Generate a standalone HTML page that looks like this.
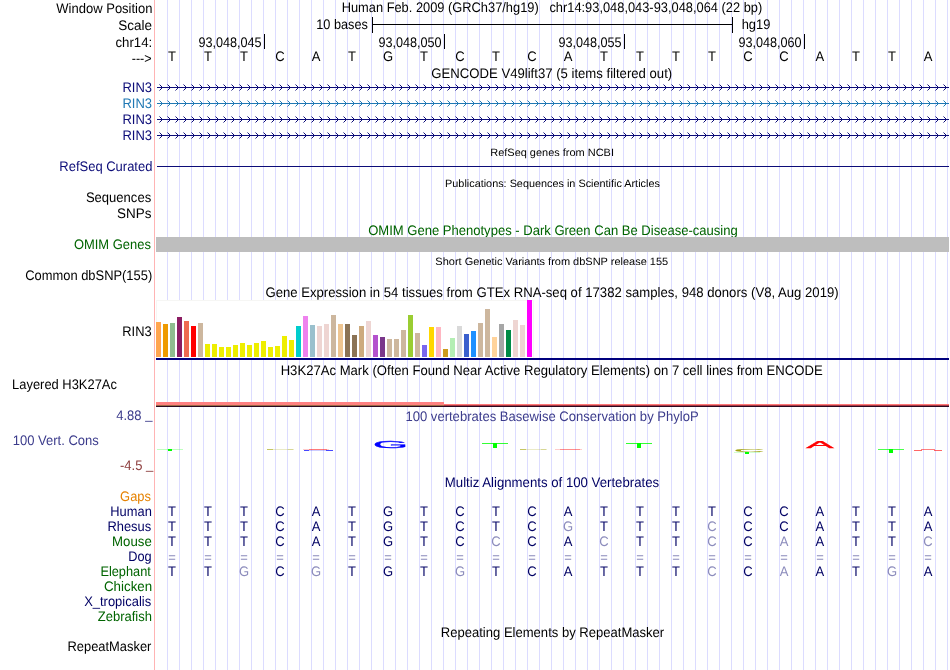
<!DOCTYPE html>
<html><head><meta charset="utf-8"><title>UCSC Genome Browser</title>
<style>html,body{margin:0;padding:0;background:#fff}body{width:950px;height:670px;overflow:hidden}svg{display:block;will-change:transform}text{font-family:"Liberation Sans",sans-serif;font-size:13.8px;fill:#000;white-space:pre;text-rendering:geometricPrecision}.s{font-size:10.6px}.m{text-anchor:middle}.d{fill:#000064}.l{fill:#8c8cbc}</style></head><body>
<svg width="950" height="670" viewBox="0 0 950 670">
<rect width="950" height="670" fill="#fff"/>
<g shape-rendering="crispEdges">
<path d="M167.5 0V670M179.5 0V670M191.5 0V670M203.5 0V670M215.5 0V670M227.5 0V670M239.5 0V670M251.5 0V670M263.5 0V670M275.5 0V670M287.5 0V670M299.5 0V670M311.5 0V670M323.5 0V670M335.5 0V670M347.5 0V670M359.5 0V670M371.5 0V670M383.5 0V670M395.5 0V670M407.5 0V670M419.5 0V670M431.5 0V670M443.5 0V670M455.5 0V670M467.5 0V670M479.5 0V670M491.5 0V670M503.5 0V670M515.5 0V670M527.5 0V670M539.5 0V670M551.5 0V670M563.5 0V670M575.5 0V670M587.5 0V670M599.5 0V670M611.5 0V670M623.5 0V670M635.5 0V670M647.5 0V670M659.5 0V670M671.5 0V670M683.5 0V670M695.5 0V670M707.5 0V670M719.5 0V670M731.5 0V670M743.5 0V670M755.5 0V670M767.5 0V670M779.5 0V670M791.5 0V670M803.5 0V670M815.5 0V670M827.5 0V670M839.5 0V670M851.5 0V670M863.5 0V670M875.5 0V670M887.5 0V670M899.5 0V670M911.5 0V670M923.5 0V670M935.5 0V670M947.5 0V670" stroke="#dcdcff" stroke-width="1" fill="none"/>
<rect x="154" y="0" width="1" height="670" fill="#ffb4b4"/>
</g>
<text x="341.67" y="12.4" textLength="420.54" lengthAdjust="spacingAndGlyphs" xml:space="preserve">Human Feb. 2009 (GRCh37/hg19)   chr14:93,048,043-93,048,064 (22 bp)</text>
<text x="316.28" y="29" textLength="51.62" lengthAdjust="spacingAndGlyphs" xml:space="preserve">10 bases</text>
<text x="741.67" y="29" textLength="28.69" lengthAdjust="spacingAndGlyphs" xml:space="preserve">hg19</text>
<text x="198.40" y="46.9" textLength="63.26" lengthAdjust="spacingAndGlyphs" xml:space="preserve">93,048,045</text>
<text x="378.40" y="46.9" textLength="63.26" lengthAdjust="spacingAndGlyphs" xml:space="preserve">93,048,050</text>
<text x="558.40" y="46.9" textLength="63.26" lengthAdjust="spacingAndGlyphs" xml:space="preserve">93,048,055</text>
<text x="738.40" y="46.9" textLength="63.26" lengthAdjust="spacingAndGlyphs" xml:space="preserve">93,048,060</text>
<text x="431.35" y="77.6" textLength="240.85" lengthAdjust="spacingAndGlyphs" xml:space="preserve">GENCODE V49lift37 (5 items filtered out)</text>
<text x="490.27" y="155.8" textLength="123.68" lengthAdjust="spacingAndGlyphs" class="s" xml:space="preserve">RefSeq genes from NCBI</text>
<text x="445.08" y="186.8" textLength="214.78" lengthAdjust="spacingAndGlyphs" class="s" xml:space="preserve">Publications: Sequences in Scientific Articles</text>
<text x="368.20" y="234.5" textLength="369.53" lengthAdjust="spacingAndGlyphs" style="fill:#006400" xml:space="preserve">OMIM Gene Phenotypes - Dark Green Can Be Disease-causing</text>
<text x="435.36" y="264.8" textLength="232.82" lengthAdjust="spacingAndGlyphs" class="s" xml:space="preserve">Short Genetic Variants from dbSNP release 155</text>
<text x="265.45" y="296.8" textLength="573.22" lengthAdjust="spacingAndGlyphs" xml:space="preserve">Gene Expression in 54 tissues from GTEx RNA-seq of 17382 samples, 948 donors (V8, Aug 2019)</text>
<text x="280.65" y="374.8" textLength="542.03" lengthAdjust="spacingAndGlyphs" xml:space="preserve">H3K27Ac Mark (Often Found Near Active Regulatory Elements) on 7 cell lines from ENCODE</text>
<text x="405.45" y="420.7" textLength="293.24" lengthAdjust="spacingAndGlyphs" style="fill:#3c3c8c" xml:space="preserve">100 vertebrates Basewise Conservation by PhyloP</text>
<text x="444.84" y="487" textLength="214.30" lengthAdjust="spacingAndGlyphs" style="fill:#000064" xml:space="preserve">Multiz Alignments of 100 Vertebrates</text>
<text x="440.75" y="636.8" textLength="223.45" lengthAdjust="spacingAndGlyphs" xml:space="preserve">Repeating Elements by RepeatMasker</text>
<text x="56.35" y="12.6" textLength="96.14" lengthAdjust="spacingAndGlyphs" xml:space="preserve">Window Position</text>
<text x="118.17" y="29.5" textLength="33.78" lengthAdjust="spacingAndGlyphs" xml:space="preserve">Scale</text>
<text x="115.45" y="46.5" textLength="36.80" lengthAdjust="spacingAndGlyphs" xml:space="preserve">chr14:</text>
<text x="131.75" y="62.8" textLength="19.87" lengthAdjust="spacingAndGlyphs" xml:space="preserve">---&gt;</text>
<text x="122.41" y="91.9" textLength="29.55" lengthAdjust="spacingAndGlyphs" style="fill:#0c0c78" xml:space="preserve">RIN3</text>
<text x="122.41" y="107.9" textLength="29.55" lengthAdjust="spacingAndGlyphs" style="fill:#1f78b4" xml:space="preserve">RIN3</text>
<text x="122.41" y="123.9" textLength="29.55" lengthAdjust="spacingAndGlyphs" style="fill:#0c0c78" xml:space="preserve">RIN3</text>
<text x="122.41" y="139.9" textLength="29.55" lengthAdjust="spacingAndGlyphs" style="fill:#0c0c78" xml:space="preserve">RIN3</text>
<text x="59.31" y="170.7" textLength="93.12" lengthAdjust="spacingAndGlyphs" style="fill:#0c0c78" xml:space="preserve">RefSeq Curated</text>
<text x="85.90" y="202" textLength="65.29" lengthAdjust="spacingAndGlyphs" xml:space="preserve">Sequences</text>
<text x="117.08" y="217.6" textLength="34.35" lengthAdjust="spacingAndGlyphs" xml:space="preserve">SNPs</text>
<text x="73.95" y="248.8" textLength="76.94" lengthAdjust="spacingAndGlyphs" style="fill:#006400" xml:space="preserve">OMIM Genes</text>
<text x="25.21" y="280" textLength="127.02" lengthAdjust="spacingAndGlyphs" xml:space="preserve">Common dbSNP(155)</text>
<text x="122.32" y="335.8" textLength="29.34" lengthAdjust="spacingAndGlyphs" xml:space="preserve">RIN3</text>
<text x="12.11" y="388.8" textLength="104.82" lengthAdjust="spacingAndGlyphs" xml:space="preserve">Layered H3K27Ac</text>
<text x="116.30" y="420" textLength="36.10" lengthAdjust="spacingAndGlyphs" style="fill:#3c3c8c" xml:space="preserve">4.88 <tspan dy="-0.9">_</tspan></text>
<text x="12.71" y="444.7" textLength="86.11" lengthAdjust="spacingAndGlyphs" style="fill:#3c3c8c" xml:space="preserve">100 Vert. Cons</text>
<text x="120.00" y="470.2" textLength="33.27" lengthAdjust="spacingAndGlyphs" style="fill:#8c3c3c" xml:space="preserve">-4.5 <tspan dy="-0.9">_</tspan></text>
<text x="120.12" y="500.7" textLength="30.82" lengthAdjust="spacingAndGlyphs" style="fill:#e68200" xml:space="preserve">Gaps</text>
<text x="110.32" y="515.8" textLength="41.48" lengthAdjust="spacingAndGlyphs" style="fill:#000064" xml:space="preserve">Human</text>
<text x="107.42" y="530.9" textLength="43.73" lengthAdjust="spacingAndGlyphs" style="fill:#000064" xml:space="preserve">Rhesus</text>
<text x="112.09" y="545.9" textLength="39.66" lengthAdjust="spacingAndGlyphs" style="fill:#006400" xml:space="preserve">Mouse</text>
<text x="128.22" y="560.8" textLength="23.41" lengthAdjust="spacingAndGlyphs" style="fill:#000064" xml:space="preserve">Dog</text>
<text x="100.42" y="575.8" textLength="50.43" lengthAdjust="spacingAndGlyphs" style="fill:#006400" xml:space="preserve">Elephant</text>
<text x="103.98" y="590.7" textLength="48.20" lengthAdjust="spacingAndGlyphs" style="fill:#006400" xml:space="preserve">Chicken</text>
<text x="84.15" y="605.6" textLength="67.01" lengthAdjust="spacingAndGlyphs" style="fill:#000064" xml:space="preserve">X_tropicalis</text>
<text x="97.75" y="620.6" textLength="54.19" lengthAdjust="spacingAndGlyphs" style="fill:#006400" xml:space="preserve">Zebrafish</text>
<text x="67.52" y="650.6" textLength="83.89" lengthAdjust="spacingAndGlyphs" xml:space="preserve">RepeatMasker</text>
<g shape-rendering="crispEdges" fill="#000"><rect x="372" y="24" width="361" height="1"/><rect x="372" y="17" width="1" height="16"/><rect x="732" y="17" width="1" height="16"/>
<rect x="264" y="34" width="1" height="15"/>
<rect x="444" y="34" width="1" height="15"/>
<rect x="624" y="34" width="1" height="15"/>
<rect x="804" y="34" width="1" height="15"/>
</g>
<g transform="scale(0.9420 1)">
<text x="182.58" y="60.9" class="m">T</text>
<text x="220.80" y="60.9" class="m">T</text>
<text x="259.02" y="60.9" class="m">T</text>
<text x="297.23" y="60.9" class="m">C</text>
<text x="335.45" y="60.9" class="m">A</text>
<text x="373.66" y="60.9" class="m">T</text>
<text x="411.88" y="60.9" class="m">G</text>
<text x="450.09" y="60.9" class="m">T</text>
<text x="488.31" y="60.9" class="m">C</text>
<text x="526.52" y="60.9" class="m">T</text>
<text x="564.74" y="60.9" class="m">C</text>
<text x="602.95" y="60.9" class="m">A</text>
<text x="641.17" y="60.9" class="m">T</text>
<text x="679.38" y="60.9" class="m">T</text>
<text x="717.60" y="60.9" class="m">T</text>
<text x="755.82" y="60.9" class="m">T</text>
<text x="794.03" y="60.9" class="m">C</text>
<text x="832.25" y="60.9" class="m">C</text>
<text x="870.46" y="60.9" class="m">A</text>
<text x="908.68" y="60.9" class="m">T</text>
<text x="946.89" y="60.9" class="m">T</text>
<text x="985.11" y="60.9" class="m">A</text>
</g>
<path d="M157 87.5H949M159.5 84.5l3 3l-3 3M167.5 84.5l3 3l-3 3M175.5 84.5l3 3l-3 3M183.5 84.5l3 3l-3 3M191.5 84.5l3 3l-3 3M199.5 84.5l3 3l-3 3M207.5 84.5l3 3l-3 3M215.5 84.5l3 3l-3 3M223.5 84.5l3 3l-3 3M231.5 84.5l3 3l-3 3M239.5 84.5l3 3l-3 3M247.5 84.5l3 3l-3 3M255.5 84.5l3 3l-3 3M263.5 84.5l3 3l-3 3M271.5 84.5l3 3l-3 3M279.5 84.5l3 3l-3 3M287.5 84.5l3 3l-3 3M295.5 84.5l3 3l-3 3M303.5 84.5l3 3l-3 3M311.5 84.5l3 3l-3 3M319.5 84.5l3 3l-3 3M327.5 84.5l3 3l-3 3M335.5 84.5l3 3l-3 3M343.5 84.5l3 3l-3 3M351.5 84.5l3 3l-3 3M359.5 84.5l3 3l-3 3M367.5 84.5l3 3l-3 3M375.5 84.5l3 3l-3 3M383.5 84.5l3 3l-3 3M391.5 84.5l3 3l-3 3M399.5 84.5l3 3l-3 3M407.5 84.5l3 3l-3 3M415.5 84.5l3 3l-3 3M423.5 84.5l3 3l-3 3M431.5 84.5l3 3l-3 3M439.5 84.5l3 3l-3 3M447.5 84.5l3 3l-3 3M455.5 84.5l3 3l-3 3M463.5 84.5l3 3l-3 3M471.5 84.5l3 3l-3 3M479.5 84.5l3 3l-3 3M487.5 84.5l3 3l-3 3M495.5 84.5l3 3l-3 3M503.5 84.5l3 3l-3 3M511.5 84.5l3 3l-3 3M519.5 84.5l3 3l-3 3M527.5 84.5l3 3l-3 3M535.5 84.5l3 3l-3 3M543.5 84.5l3 3l-3 3M551.5 84.5l3 3l-3 3M559.5 84.5l3 3l-3 3M567.5 84.5l3 3l-3 3M575.5 84.5l3 3l-3 3M583.5 84.5l3 3l-3 3M591.5 84.5l3 3l-3 3M599.5 84.5l3 3l-3 3M607.5 84.5l3 3l-3 3M615.5 84.5l3 3l-3 3M623.5 84.5l3 3l-3 3M631.5 84.5l3 3l-3 3M639.5 84.5l3 3l-3 3M647.5 84.5l3 3l-3 3M655.5 84.5l3 3l-3 3M663.5 84.5l3 3l-3 3M671.5 84.5l3 3l-3 3M679.5 84.5l3 3l-3 3M687.5 84.5l3 3l-3 3M695.5 84.5l3 3l-3 3M703.5 84.5l3 3l-3 3M711.5 84.5l3 3l-3 3M719.5 84.5l3 3l-3 3M727.5 84.5l3 3l-3 3M735.5 84.5l3 3l-3 3M743.5 84.5l3 3l-3 3M751.5 84.5l3 3l-3 3M759.5 84.5l3 3l-3 3M767.5 84.5l3 3l-3 3M775.5 84.5l3 3l-3 3M783.5 84.5l3 3l-3 3M791.5 84.5l3 3l-3 3M799.5 84.5l3 3l-3 3M807.5 84.5l3 3l-3 3M815.5 84.5l3 3l-3 3M823.5 84.5l3 3l-3 3M831.5 84.5l3 3l-3 3M839.5 84.5l3 3l-3 3M847.5 84.5l3 3l-3 3M855.5 84.5l3 3l-3 3M863.5 84.5l3 3l-3 3M871.5 84.5l3 3l-3 3M879.5 84.5l3 3l-3 3M887.5 84.5l3 3l-3 3M895.5 84.5l3 3l-3 3M903.5 84.5l3 3l-3 3M911.5 84.5l3 3l-3 3M919.5 84.5l3 3l-3 3M927.5 84.5l3 3l-3 3M935.5 84.5l3 3l-3 3M943.5 84.5l3 3l-3 3" stroke="#0c0c78" stroke-width="1" fill="none"/>
<path d="M157 103.5H949M159.5 100.5l3 3l-3 3M167.5 100.5l3 3l-3 3M175.5 100.5l3 3l-3 3M183.5 100.5l3 3l-3 3M191.5 100.5l3 3l-3 3M199.5 100.5l3 3l-3 3M207.5 100.5l3 3l-3 3M215.5 100.5l3 3l-3 3M223.5 100.5l3 3l-3 3M231.5 100.5l3 3l-3 3M239.5 100.5l3 3l-3 3M247.5 100.5l3 3l-3 3M255.5 100.5l3 3l-3 3M263.5 100.5l3 3l-3 3M271.5 100.5l3 3l-3 3M279.5 100.5l3 3l-3 3M287.5 100.5l3 3l-3 3M295.5 100.5l3 3l-3 3M303.5 100.5l3 3l-3 3M311.5 100.5l3 3l-3 3M319.5 100.5l3 3l-3 3M327.5 100.5l3 3l-3 3M335.5 100.5l3 3l-3 3M343.5 100.5l3 3l-3 3M351.5 100.5l3 3l-3 3M359.5 100.5l3 3l-3 3M367.5 100.5l3 3l-3 3M375.5 100.5l3 3l-3 3M383.5 100.5l3 3l-3 3M391.5 100.5l3 3l-3 3M399.5 100.5l3 3l-3 3M407.5 100.5l3 3l-3 3M415.5 100.5l3 3l-3 3M423.5 100.5l3 3l-3 3M431.5 100.5l3 3l-3 3M439.5 100.5l3 3l-3 3M447.5 100.5l3 3l-3 3M455.5 100.5l3 3l-3 3M463.5 100.5l3 3l-3 3M471.5 100.5l3 3l-3 3M479.5 100.5l3 3l-3 3M487.5 100.5l3 3l-3 3M495.5 100.5l3 3l-3 3M503.5 100.5l3 3l-3 3M511.5 100.5l3 3l-3 3M519.5 100.5l3 3l-3 3M527.5 100.5l3 3l-3 3M535.5 100.5l3 3l-3 3M543.5 100.5l3 3l-3 3M551.5 100.5l3 3l-3 3M559.5 100.5l3 3l-3 3M567.5 100.5l3 3l-3 3M575.5 100.5l3 3l-3 3M583.5 100.5l3 3l-3 3M591.5 100.5l3 3l-3 3M599.5 100.5l3 3l-3 3M607.5 100.5l3 3l-3 3M615.5 100.5l3 3l-3 3M623.5 100.5l3 3l-3 3M631.5 100.5l3 3l-3 3M639.5 100.5l3 3l-3 3M647.5 100.5l3 3l-3 3M655.5 100.5l3 3l-3 3M663.5 100.5l3 3l-3 3M671.5 100.5l3 3l-3 3M679.5 100.5l3 3l-3 3M687.5 100.5l3 3l-3 3M695.5 100.5l3 3l-3 3M703.5 100.5l3 3l-3 3M711.5 100.5l3 3l-3 3M719.5 100.5l3 3l-3 3M727.5 100.5l3 3l-3 3M735.5 100.5l3 3l-3 3M743.5 100.5l3 3l-3 3M751.5 100.5l3 3l-3 3M759.5 100.5l3 3l-3 3M767.5 100.5l3 3l-3 3M775.5 100.5l3 3l-3 3M783.5 100.5l3 3l-3 3M791.5 100.5l3 3l-3 3M799.5 100.5l3 3l-3 3M807.5 100.5l3 3l-3 3M815.5 100.5l3 3l-3 3M823.5 100.5l3 3l-3 3M831.5 100.5l3 3l-3 3M839.5 100.5l3 3l-3 3M847.5 100.5l3 3l-3 3M855.5 100.5l3 3l-3 3M863.5 100.5l3 3l-3 3M871.5 100.5l3 3l-3 3M879.5 100.5l3 3l-3 3M887.5 100.5l3 3l-3 3M895.5 100.5l3 3l-3 3M903.5 100.5l3 3l-3 3M911.5 100.5l3 3l-3 3M919.5 100.5l3 3l-3 3M927.5 100.5l3 3l-3 3M935.5 100.5l3 3l-3 3M943.5 100.5l3 3l-3 3" stroke="#1f78b4" stroke-width="1" fill="none"/>
<path d="M157 119.5H949M159.5 116.5l3 3l-3 3M167.5 116.5l3 3l-3 3M175.5 116.5l3 3l-3 3M183.5 116.5l3 3l-3 3M191.5 116.5l3 3l-3 3M199.5 116.5l3 3l-3 3M207.5 116.5l3 3l-3 3M215.5 116.5l3 3l-3 3M223.5 116.5l3 3l-3 3M231.5 116.5l3 3l-3 3M239.5 116.5l3 3l-3 3M247.5 116.5l3 3l-3 3M255.5 116.5l3 3l-3 3M263.5 116.5l3 3l-3 3M271.5 116.5l3 3l-3 3M279.5 116.5l3 3l-3 3M287.5 116.5l3 3l-3 3M295.5 116.5l3 3l-3 3M303.5 116.5l3 3l-3 3M311.5 116.5l3 3l-3 3M319.5 116.5l3 3l-3 3M327.5 116.5l3 3l-3 3M335.5 116.5l3 3l-3 3M343.5 116.5l3 3l-3 3M351.5 116.5l3 3l-3 3M359.5 116.5l3 3l-3 3M367.5 116.5l3 3l-3 3M375.5 116.5l3 3l-3 3M383.5 116.5l3 3l-3 3M391.5 116.5l3 3l-3 3M399.5 116.5l3 3l-3 3M407.5 116.5l3 3l-3 3M415.5 116.5l3 3l-3 3M423.5 116.5l3 3l-3 3M431.5 116.5l3 3l-3 3M439.5 116.5l3 3l-3 3M447.5 116.5l3 3l-3 3M455.5 116.5l3 3l-3 3M463.5 116.5l3 3l-3 3M471.5 116.5l3 3l-3 3M479.5 116.5l3 3l-3 3M487.5 116.5l3 3l-3 3M495.5 116.5l3 3l-3 3M503.5 116.5l3 3l-3 3M511.5 116.5l3 3l-3 3M519.5 116.5l3 3l-3 3M527.5 116.5l3 3l-3 3M535.5 116.5l3 3l-3 3M543.5 116.5l3 3l-3 3M551.5 116.5l3 3l-3 3M559.5 116.5l3 3l-3 3M567.5 116.5l3 3l-3 3M575.5 116.5l3 3l-3 3M583.5 116.5l3 3l-3 3M591.5 116.5l3 3l-3 3M599.5 116.5l3 3l-3 3M607.5 116.5l3 3l-3 3M615.5 116.5l3 3l-3 3M623.5 116.5l3 3l-3 3M631.5 116.5l3 3l-3 3M639.5 116.5l3 3l-3 3M647.5 116.5l3 3l-3 3M655.5 116.5l3 3l-3 3M663.5 116.5l3 3l-3 3M671.5 116.5l3 3l-3 3M679.5 116.5l3 3l-3 3M687.5 116.5l3 3l-3 3M695.5 116.5l3 3l-3 3M703.5 116.5l3 3l-3 3M711.5 116.5l3 3l-3 3M719.5 116.5l3 3l-3 3M727.5 116.5l3 3l-3 3M735.5 116.5l3 3l-3 3M743.5 116.5l3 3l-3 3M751.5 116.5l3 3l-3 3M759.5 116.5l3 3l-3 3M767.5 116.5l3 3l-3 3M775.5 116.5l3 3l-3 3M783.5 116.5l3 3l-3 3M791.5 116.5l3 3l-3 3M799.5 116.5l3 3l-3 3M807.5 116.5l3 3l-3 3M815.5 116.5l3 3l-3 3M823.5 116.5l3 3l-3 3M831.5 116.5l3 3l-3 3M839.5 116.5l3 3l-3 3M847.5 116.5l3 3l-3 3M855.5 116.5l3 3l-3 3M863.5 116.5l3 3l-3 3M871.5 116.5l3 3l-3 3M879.5 116.5l3 3l-3 3M887.5 116.5l3 3l-3 3M895.5 116.5l3 3l-3 3M903.5 116.5l3 3l-3 3M911.5 116.5l3 3l-3 3M919.5 116.5l3 3l-3 3M927.5 116.5l3 3l-3 3M935.5 116.5l3 3l-3 3M943.5 116.5l3 3l-3 3" stroke="#0c0c78" stroke-width="1" fill="none"/>
<path d="M157 135.5H949M159.5 132.5l3 3l-3 3M167.5 132.5l3 3l-3 3M175.5 132.5l3 3l-3 3M183.5 132.5l3 3l-3 3M191.5 132.5l3 3l-3 3M199.5 132.5l3 3l-3 3M207.5 132.5l3 3l-3 3M215.5 132.5l3 3l-3 3M223.5 132.5l3 3l-3 3M231.5 132.5l3 3l-3 3M239.5 132.5l3 3l-3 3M247.5 132.5l3 3l-3 3M255.5 132.5l3 3l-3 3M263.5 132.5l3 3l-3 3M271.5 132.5l3 3l-3 3M279.5 132.5l3 3l-3 3M287.5 132.5l3 3l-3 3M295.5 132.5l3 3l-3 3M303.5 132.5l3 3l-3 3M311.5 132.5l3 3l-3 3M319.5 132.5l3 3l-3 3M327.5 132.5l3 3l-3 3M335.5 132.5l3 3l-3 3M343.5 132.5l3 3l-3 3M351.5 132.5l3 3l-3 3M359.5 132.5l3 3l-3 3M367.5 132.5l3 3l-3 3M375.5 132.5l3 3l-3 3M383.5 132.5l3 3l-3 3M391.5 132.5l3 3l-3 3M399.5 132.5l3 3l-3 3M407.5 132.5l3 3l-3 3M415.5 132.5l3 3l-3 3M423.5 132.5l3 3l-3 3M431.5 132.5l3 3l-3 3M439.5 132.5l3 3l-3 3M447.5 132.5l3 3l-3 3M455.5 132.5l3 3l-3 3M463.5 132.5l3 3l-3 3M471.5 132.5l3 3l-3 3M479.5 132.5l3 3l-3 3M487.5 132.5l3 3l-3 3M495.5 132.5l3 3l-3 3M503.5 132.5l3 3l-3 3M511.5 132.5l3 3l-3 3M519.5 132.5l3 3l-3 3M527.5 132.5l3 3l-3 3M535.5 132.5l3 3l-3 3M543.5 132.5l3 3l-3 3M551.5 132.5l3 3l-3 3M559.5 132.5l3 3l-3 3M567.5 132.5l3 3l-3 3M575.5 132.5l3 3l-3 3M583.5 132.5l3 3l-3 3M591.5 132.5l3 3l-3 3M599.5 132.5l3 3l-3 3M607.5 132.5l3 3l-3 3M615.5 132.5l3 3l-3 3M623.5 132.5l3 3l-3 3M631.5 132.5l3 3l-3 3M639.5 132.5l3 3l-3 3M647.5 132.5l3 3l-3 3M655.5 132.5l3 3l-3 3M663.5 132.5l3 3l-3 3M671.5 132.5l3 3l-3 3M679.5 132.5l3 3l-3 3M687.5 132.5l3 3l-3 3M695.5 132.5l3 3l-3 3M703.5 132.5l3 3l-3 3M711.5 132.5l3 3l-3 3M719.5 132.5l3 3l-3 3M727.5 132.5l3 3l-3 3M735.5 132.5l3 3l-3 3M743.5 132.5l3 3l-3 3M751.5 132.5l3 3l-3 3M759.5 132.5l3 3l-3 3M767.5 132.5l3 3l-3 3M775.5 132.5l3 3l-3 3M783.5 132.5l3 3l-3 3M791.5 132.5l3 3l-3 3M799.5 132.5l3 3l-3 3M807.5 132.5l3 3l-3 3M815.5 132.5l3 3l-3 3M823.5 132.5l3 3l-3 3M831.5 132.5l3 3l-3 3M839.5 132.5l3 3l-3 3M847.5 132.5l3 3l-3 3M855.5 132.5l3 3l-3 3M863.5 132.5l3 3l-3 3M871.5 132.5l3 3l-3 3M879.5 132.5l3 3l-3 3M887.5 132.5l3 3l-3 3M895.5 132.5l3 3l-3 3M903.5 132.5l3 3l-3 3M911.5 132.5l3 3l-3 3M919.5 132.5l3 3l-3 3M927.5 132.5l3 3l-3 3M935.5 132.5l3 3l-3 3M943.5 132.5l3 3l-3 3" stroke="#0c0c78" stroke-width="1" fill="none"/>
<rect x="157" y="166" width="792" height="1" fill="#0c0c78" shape-rendering="crispEdges"/>
<rect x="156" y="237" width="793" height="15" fill="#bebebe" shape-rendering="crispEdges"/>
<g shape-rendering="crispEdges">
<rect x="156" y="300" width="378" height="58" fill="#f6f6f4"/><rect x="157" y="301" width="376" height="57" fill="#fff"/>
<rect x="156" y="322" width="5" height="35" fill="#ffa54f"/>
<rect x="163" y="324" width="5" height="33" fill="#ee9a00"/>
<rect x="170" y="323" width="5" height="34" fill="#8fbc8f"/>
<rect x="177" y="317" width="5" height="40" fill="#8b1c62"/>
<rect x="184" y="321" width="5" height="36" fill="#ee6a50"/>
<rect x="191" y="326" width="5" height="31" fill="#ff0000"/>
<rect x="198" y="323" width="5" height="34" fill="#cdb79e"/>
<rect x="205" y="344" width="5" height="13" fill="#eeee00"/>
<rect x="212" y="344" width="5" height="13" fill="#eeee00"/>
<rect x="219" y="347" width="5" height="10" fill="#eeee00"/>
<rect x="226" y="347" width="5" height="10" fill="#eeee00"/>
<rect x="233" y="345" width="5" height="12" fill="#eeee00"/>
<rect x="240" y="343" width="5" height="14" fill="#eeee00"/>
<rect x="247" y="345" width="5" height="12" fill="#eeee00"/>
<rect x="254" y="343" width="5" height="14" fill="#eeee00"/>
<rect x="261" y="341" width="5" height="16" fill="#eeee00"/>
<rect x="268" y="347" width="5" height="10" fill="#eeee00"/>
<rect x="275" y="346" width="5" height="11" fill="#eeee00"/>
<rect x="282" y="336" width="5" height="21" fill="#eeee00"/>
<rect x="289" y="340" width="5" height="17" fill="#eeee00"/>
<rect x="296" y="326" width="5" height="31" fill="#00cdcd"/>
<rect x="303" y="316" width="5" height="41" fill="#ee82ee"/>
<rect x="310" y="325" width="5" height="32" fill="#9ac0cd"/>
<rect x="317" y="326" width="5" height="31" fill="#eed5d2"/>
<rect x="324" y="324" width="5" height="33" fill="#eed5d2"/>
<rect x="331" y="315" width="5" height="42" fill="#cdb79e"/>
<rect x="338" y="324" width="5" height="33" fill="#eec591"/>
<rect x="345" y="324" width="5" height="33" fill="#8b7355"/>
<rect x="352" y="335" width="5" height="22" fill="#8b7355"/>
<rect x="359" y="326" width="5" height="31" fill="#cdaa7d"/>
<rect x="366" y="321" width="5" height="36" fill="#eed5d2"/>
<rect x="373" y="335" width="5" height="22" fill="#b452cd"/>
<rect x="380" y="337" width="5" height="20" fill="#7a378b"/>
<rect x="387" y="339" width="5" height="18" fill="#cdb79e"/>
<rect x="394" y="339" width="5" height="18" fill="#cdb79e"/>
<rect x="401" y="330" width="5" height="27" fill="#cdb79e"/>
<rect x="408" y="315" width="5" height="42" fill="#9acd32"/>
<rect x="415" y="333" width="5" height="24" fill="#cdb79e"/>
<rect x="422" y="345" width="5" height="12" fill="#7a67ee"/>
<rect x="429" y="327" width="5" height="30" fill="#ffd700"/>
<rect x="436" y="327" width="5" height="30" fill="#ffb6c1"/>
<rect x="443" y="349" width="5" height="8" fill="#cd9b1d"/>
<rect x="450" y="338" width="5" height="19" fill="#b4eeb4"/>
<rect x="457" y="326" width="5" height="31" fill="#d9d9d9"/>
<rect x="464" y="334" width="5" height="23" fill="#3a5fcd"/>
<rect x="471" y="331" width="5" height="26" fill="#1e90ff"/>
<rect x="478" y="323" width="5" height="34" fill="#cdb79e"/>
<rect x="485" y="309" width="5" height="48" fill="#cdb79e"/>
<rect x="492" y="337" width="5" height="20" fill="#ffd39b"/>
<rect x="499" y="324" width="5" height="33" fill="#a6a6a6"/>
<rect x="506" y="330" width="5" height="27" fill="#008b45"/>
<rect x="513" y="320" width="5" height="37" fill="#eed5d2"/>
<rect x="520" y="325" width="5" height="32" fill="#eed5d2"/>
<rect x="527" y="300" width="5" height="57" fill="#ff00ff"/>
<rect x="156" y="358" width="793" height="2" fill="#00007d"/>
</g>
<g shape-rendering="crispEdges">
<rect x="156" y="402" width="288" height="3" fill="#ff8080"/>
<rect x="156" y="405" width="288" height="1" fill="#9c6b45"/>
<rect x="444" y="404" width="505" height="1" fill="#ff7878"/>
<rect x="444" y="405" width="505" height="1" fill="#a83845"/>
<rect x="156" y="406" width="793" height="1" fill="#2a0a20"/>
</g>
<g shape-rendering="crispEdges">
<rect x="157" y="449" width="26" height="1" fill="#00ff00" opacity="0.25"/>
<rect x="168" y="449" width="4" height="2" fill="#00ff00"/>
<rect x="482" y="443" width="26" height="1" fill="#00ff00" opacity="0.8"/>
<rect x="493" y="443" width="4" height="5" fill="#00ff00"/>
<rect x="626" y="443" width="26" height="1" fill="#00ff00" opacity="0.8"/>
<rect x="637" y="443" width="4" height="5" fill="#00ff00"/>
<rect x="878" y="449" width="26" height="1" fill="#00ff00" opacity="0.7"/>
<rect x="889" y="449" width="4" height="4" fill="#00ff00"/>
<rect x="267" y="449" width="27" height="1" fill="#a0a000" opacity="0.22"/>
<rect x="267" y="449" width="6" height="1" fill="#a0a000" opacity="0.5"/>
<rect x="288" y="449" width="5" height="1" fill="#a0a000" opacity="0.25"/>
<rect x="520" y="449" width="27" height="1" fill="#a0a000" opacity="0.22"/>
<rect x="520" y="449" width="6" height="1" fill="#a0a000" opacity="0.5"/>
<rect x="541" y="449" width="5" height="1" fill="#a0a000" opacity="0.25"/>
<rect x="303" y="449" width="26" height="1" fill="#ff0000" opacity="0.2"/>
<rect x="309" y="449" width="18" height="1" fill="#ff0000" opacity="0.4"/>
<rect x="304" y="450" width="29" height="1" fill="#0000ff" opacity="0.2"/>
<rect x="304" y="450" width="5" height="1" fill="#0000ff" opacity="0.65"/>
<rect x="326" y="450" width="7" height="1" fill="#0000ff" opacity="0.65"/>
<rect x="555" y="449" width="27" height="1" fill="#ff0000" opacity="0.2"/>
<rect x="560" y="449" width="20" height="1" fill="#ff0000" opacity="0.3"/>
<rect x="734" y="452" width="26" height="1" fill="#00ff00" opacity="0.18"/>
<rect x="745" y="452" width="4" height="2" fill="#00ff00"/>
<rect x="921" y="449" width="14" height="1" fill="#ff0000" opacity="0.5"/>
<rect x="914" y="450" width="8" height="1" fill="#ff0000" opacity="0.6"/>
<rect x="934" y="450" width="8" height="1" fill="#ff0000" opacity="0.6"/>
</g>
<text transform="translate(373 448.1) scale(4.5 1.0)" x="0" y="0" style="font-size:10px;fill:#0000ff;text-rendering:geometricPrecision;stroke:#0000ff;stroke-width:0.3px;vector-effect:non-scaling-stroke">G</text>
<text transform="translate(733.7 451.9) scale(4.3 0.43)" x="0" y="0" style="font-size:10px;fill:#a0a010;text-rendering:geometricPrecision;stroke:#a0a010;stroke-width:0.25px;vector-effect:non-scaling-stroke">C</text>
<text transform="translate(806.2 448.1) scale(4.1 1.01)" x="0" y="0" style="font-size:10px;fill:#ff0000;text-rendering:geometricPrecision;stroke:#ff0000;stroke-width:0.3px;vector-effect:non-scaling-stroke">A</text>
<g transform="scale(0.9420 1)">
<text x="182.58" y="515.8" class="m d">T</text>
<text x="220.80" y="515.8" class="m d">T</text>
<text x="259.02" y="515.8" class="m d">T</text>
<text x="297.23" y="515.8" class="m d">C</text>
<text x="335.45" y="515.8" class="m d">A</text>
<text x="373.66" y="515.8" class="m d">T</text>
<text x="411.88" y="515.8" class="m d">G</text>
<text x="450.09" y="515.8" class="m d">T</text>
<text x="488.31" y="515.8" class="m d">C</text>
<text x="526.52" y="515.8" class="m d">T</text>
<text x="564.74" y="515.8" class="m d">C</text>
<text x="602.95" y="515.8" class="m d">A</text>
<text x="641.17" y="515.8" class="m d">T</text>
<text x="679.38" y="515.8" class="m d">T</text>
<text x="717.60" y="515.8" class="m d">T</text>
<text x="755.82" y="515.8" class="m d">T</text>
<text x="794.03" y="515.8" class="m d">C</text>
<text x="832.25" y="515.8" class="m d">C</text>
<text x="870.46" y="515.8" class="m d">A</text>
<text x="908.68" y="515.8" class="m d">T</text>
<text x="946.89" y="515.8" class="m d">T</text>
<text x="985.11" y="515.8" class="m d">A</text>
<text x="182.58" y="530.9" class="m d">T</text>
<text x="220.80" y="530.9" class="m d">T</text>
<text x="259.02" y="530.9" class="m d">T</text>
<text x="297.23" y="530.9" class="m d">C</text>
<text x="335.45" y="530.9" class="m d">A</text>
<text x="373.66" y="530.9" class="m d">T</text>
<text x="411.88" y="530.9" class="m d">G</text>
<text x="450.09" y="530.9" class="m d">T</text>
<text x="488.31" y="530.9" class="m d">C</text>
<text x="526.52" y="530.9" class="m d">T</text>
<text x="564.74" y="530.9" class="m d">C</text>
<text x="602.95" y="530.9" class="m l">G</text>
<text x="641.17" y="530.9" class="m d">T</text>
<text x="679.38" y="530.9" class="m d">T</text>
<text x="717.60" y="530.9" class="m d">T</text>
<text x="755.82" y="530.9" class="m l">C</text>
<text x="794.03" y="530.9" class="m d">C</text>
<text x="832.25" y="530.9" class="m d">C</text>
<text x="870.46" y="530.9" class="m d">A</text>
<text x="908.68" y="530.9" class="m d">T</text>
<text x="946.89" y="530.9" class="m d">T</text>
<text x="985.11" y="530.9" class="m d">A</text>
<text x="182.58" y="545.9" class="m d">T</text>
<text x="220.80" y="545.9" class="m d">T</text>
<text x="259.02" y="545.9" class="m d">T</text>
<text x="297.23" y="545.9" class="m d">C</text>
<text x="335.45" y="545.9" class="m d">A</text>
<text x="373.66" y="545.9" class="m d">T</text>
<text x="411.88" y="545.9" class="m d">G</text>
<text x="450.09" y="545.9" class="m d">T</text>
<text x="488.31" y="545.9" class="m d">C</text>
<text x="526.52" y="545.9" class="m l">C</text>
<text x="564.74" y="545.9" class="m d">C</text>
<text x="602.95" y="545.9" class="m d">A</text>
<text x="641.17" y="545.9" class="m l">C</text>
<text x="679.38" y="545.9" class="m d">T</text>
<text x="717.60" y="545.9" class="m d">T</text>
<text x="755.82" y="545.9" class="m l">C</text>
<text x="794.03" y="545.9" class="m d">C</text>
<text x="832.25" y="545.9" class="m l">A</text>
<text x="870.46" y="545.9" class="m d">A</text>
<text x="908.68" y="545.9" class="m d">T</text>
<text x="946.89" y="545.9" class="m d">T</text>
<text x="985.11" y="545.9" class="m l">C</text>
<text x="182.58" y="562.0999999999999" class="m l">=</text>
<text x="220.80" y="562.0999999999999" class="m l">=</text>
<text x="259.02" y="562.0999999999999" class="m l">=</text>
<text x="297.23" y="562.0999999999999" class="m l">=</text>
<text x="335.45" y="562.0999999999999" class="m l">=</text>
<text x="373.66" y="562.0999999999999" class="m l">=</text>
<text x="411.88" y="562.0999999999999" class="m l">=</text>
<text x="450.09" y="562.0999999999999" class="m l">=</text>
<text x="488.31" y="562.0999999999999" class="m l">=</text>
<text x="526.52" y="562.0999999999999" class="m l">=</text>
<text x="564.74" y="562.0999999999999" class="m l">=</text>
<text x="602.95" y="562.0999999999999" class="m l">=</text>
<text x="641.17" y="562.0999999999999" class="m l">=</text>
<text x="679.38" y="562.0999999999999" class="m l">=</text>
<text x="717.60" y="562.0999999999999" class="m l">=</text>
<text x="755.82" y="562.0999999999999" class="m l">=</text>
<text x="794.03" y="562.0999999999999" class="m l">=</text>
<text x="832.25" y="562.0999999999999" class="m l">=</text>
<text x="870.46" y="562.0999999999999" class="m l">=</text>
<text x="908.68" y="562.0999999999999" class="m l">=</text>
<text x="946.89" y="562.0999999999999" class="m l">=</text>
<text x="985.11" y="562.0999999999999" class="m l">=</text>
<text x="182.58" y="575.8" class="m d">T</text>
<text x="220.80" y="575.8" class="m d">T</text>
<text x="259.02" y="575.8" class="m l">G</text>
<text x="297.23" y="575.8" class="m d">C</text>
<text x="335.45" y="575.8" class="m l">G</text>
<text x="373.66" y="575.8" class="m d">T</text>
<text x="411.88" y="575.8" class="m d">G</text>
<text x="450.09" y="575.8" class="m d">T</text>
<text x="488.31" y="575.8" class="m l">G</text>
<text x="526.52" y="575.8" class="m d">T</text>
<text x="564.74" y="575.8" class="m d">C</text>
<text x="602.95" y="575.8" class="m d">A</text>
<text x="641.17" y="575.8" class="m d">T</text>
<text x="679.38" y="575.8" class="m d">T</text>
<text x="717.60" y="575.8" class="m d">T</text>
<text x="755.82" y="575.8" class="m l">C</text>
<text x="794.03" y="575.8" class="m d">C</text>
<text x="832.25" y="575.8" class="m l">A</text>
<text x="870.46" y="575.8" class="m d">A</text>
<text x="908.68" y="575.8" class="m d">T</text>
<text x="946.89" y="575.8" class="m l">G</text>
<text x="985.11" y="575.8" class="m d">A</text>
</g>
</svg></body></html>
